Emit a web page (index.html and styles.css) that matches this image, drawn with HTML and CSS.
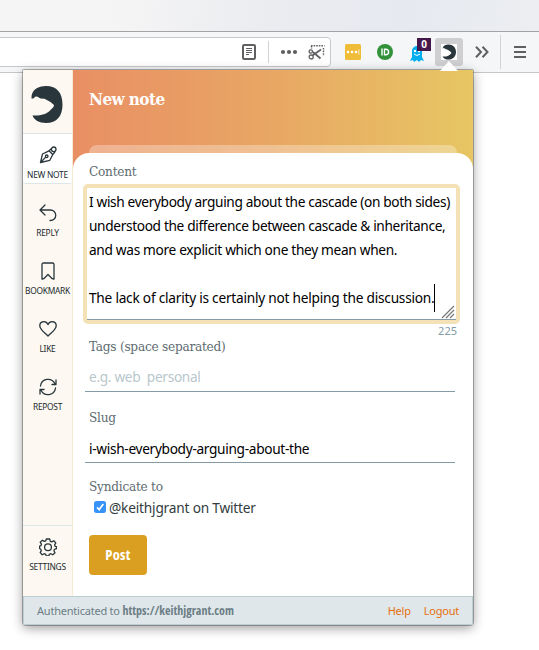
FILE: index.html
```html
<!DOCTYPE html>
<html lang="en">
<head>
<meta charset="utf-8">
<title>New note</title>
<link rel="stylesheet" href="styles.css">
</head>
<body>
<div class="titlebar"></div>
<div class="toolbar">
  <div class="urlbar">
    <svg class="reader" width="14" height="16" viewBox="0 0 14 16"><rect x="1" y="1" width="12" height="14" rx="1.2" fill="none" stroke="#606063" stroke-width="2"/><path d="M4 4.5h6M4 6.5h6M4 8.5h6M4 10.5h3" stroke="#606063"/></svg>
    <i class="sep"></i>
    <svg class="dots" width="18" height="6" viewBox="0 0 18 6" fill="#606063"><circle cx="3" cy="3" r="2.1"/><circle cx="9" cy="3" r="2.1"/><circle cx="15" cy="3" r="2.1"/></svg>
    <svg class="snip" width="17" height="17" viewBox="0 0 17 17" fill="none" stroke="#606063"><path d="M3 1.7h13.500M15.500 4v8M3.500 2v3" stroke-width="1.400" stroke-dasharray="1.6 1"/><path d="M5 8l7.500 6.500M4.500 11.500l8.500-6" stroke-width="1.700"/><circle cx="2.800" cy="7.500" r="1.700" stroke-width="1.300"/><circle cx="3.200" cy="13" r="2" stroke-width="1.300"/></svg>
  </div>
  <div class="tool yellow"><svg width="16" height="16" viewBox="0 0 16 16"><rect width="16" height="16" rx="1.5" fill="#f0bd38"/><g fill="#fff"><circle cx="3" cy="8" r="1.3"/><circle cx="7" cy="8" r="1.3"/><circle cx="11" cy="8" r="1.3"/><path d="M13.5 5.5h.8v5h-.8z"/></g></svg></div>
  <div class="tool green"><svg width="16" height="16" viewBox="0 0 16 16"><circle cx="8" cy="8" r="8" fill="#33913a"/><path d="M5 4.500v7M7.500 5.200h1.300a2.800 2.800 0 0 1 0 5.600H7.500z" fill="none" stroke="#fff" stroke-width="1.400"/></svg></div>
  <div class="tool ghost"><svg width="14" height="17" viewBox="0 0 14 17"><path d="M2 12V6a5 5 0 0 1 10 0v6l2 4-3-1-2 2-2-2-3 2-1-2-3 1z" fill="#00aef0"/><circle cx="5" cy="6" r="1.2" fill="#fff"/><circle cx="9" cy="6" r="1.2" fill="#fff"/><path d="M4 9q3 3 6 0" stroke="#fff" fill="none"/></svg><b class="badge">0</b></div>
  <div class="tool active"><svg width="16" height="16" viewBox="0 0 32 36" preserveAspectRatio="none"><path fill="#fff" d="M0 0h32v36H0z"/><path fill="#29363b" d="M3 10C5 3 9 1 15 1c9 0 15 7 15 17s-6 17-15 17C9 35 5 32 3 28c8 1 14-2 18-8-4-6-8-8-12-9l-3-2z"/></svg></div>
  <div class="tool more"><svg width="14" height="12" viewBox="0 0 14 12" fill="none" stroke="#606063" stroke-width="2"><path d="M1 .8L6 6l-5 5.2M7.5.8l5 5.2-5 5.2"/></svg></div>
  <i class="sep tall"></i>
  <div class="tool menu"><svg width="12" height="12" viewBox="0 0 12 12" stroke="#606063" stroke-width="2"><path d="M0 1h12M0 6h12M0 11h12"/></svg></div>
</div>

<div class="popup">
  <svg class="arrow" width="18" height="10" viewBox="0 0 18 10"><path d="M0 10L9 0l9 10z" fill="#fff"/></svg>
  <div class="main">
    <nav class="side">
      <div class="logo"><svg width="32" height="37" viewBox="0 0 32 37"><path fill="#29363b" d="M.5 12.500C0 4 7 0 15 0c11 0 16.500 7 16.500 18.500S26 37 15 37C8 37 3 34 1.500 29.500c8 .5 14-1.500 17-4.500l4-4 .5-2-3.500-3-6-3.200L9.500 12.500 6 10.500l-2 .2-1.500 1.800z"/></svg></div>
      <a class="item current"><svg width="18" height="18" viewBox="0 0 18 18"><path d="M1.500 16.500L3.500 8l6.500-3.200 3.800 3.700-3 5.800zM2 16l4.700-4.900M10 4.800L12 3M13.800 8.500l2-2.500"/><circle cx="14.700" cy="3.300" r="2.300"/><circle cx="7.700" cy="10.300" r="1.300"/></svg><span>NEW NOTE</span></a>
      <a class="item"><svg width="18" height="18" viewBox="0 0 18 18"><path d="M6 1L1 6l5 5M1 6h10.500a5 5 0 0 1 0 10.500H11"/></svg><span>REPLY</span></a>
      <a class="item"><svg width="18" height="18" viewBox="0 0 18 18"><path d="M3 17V2.500q0-1.500 1.500-1.500h9q1.500 0 1.500 1.500V17l-2-.5-4-4-4 4z"/></svg><span>BOOKMARK</span></a>
      <a class="item"><svg width="18" height="18" viewBox="0 0 18 18"><path d="M9 16C5 12 .8 9.500.8 5.700.8 1 7 .2 9 4.600 11 .2 17.200 1 17.200 5.700 17.200 9.500 13 12 9 16z"/></svg><span>LIKE</span></a>
      <a class="item"><svg width="18" height="18" viewBox="0 0 18 18"><path d="M1.500 8A7.600 7.600 0 0 1 15.800 5.500M17 2v4.500h-4M16.500 10A7.600 7.600 0 0 1 2.200 12.500M1 16v-4.500h4"/></svg><span>REPOST</span></a>
      <a class="item settings"><svg width="18" height="18" viewBox="0 0 18 18"><path d="M7.300 1h3.400l.6 2.300 1.500.6 2-1.200 2 2.200-1.200 2 .5 1.400 1.400.4v2l-2 .6-.6 1.500 1.100 2-2.200 2-2-1.100-1.500.6-.5 1.700H7.300l-.6-1.700-1.500-.6-2 1.100-2-2.200 1.100-2-.6-1.400L.6 10.500v-2.300l1.300-.5.5-1.500-1.200-2 2.200-2 2 1.200 1.400-.6z"/><circle cx="9" cy="9.200" r="3.400"/></svg><span>SETTINGS</span></a>
    </nav>
    <section class="body">
      <h1><span>New note</span></h1>
      <div class="backsheet"></div>
      <form class="sheet">
        <div class="label l-content">Content</div>
        <div class="area">
          <p><span class="t1">I wish everybody arguing about the cascade (on both sides)</span></p>
          <p><span class="t2">understood the difference between cascade &amp; inheritance,</span></p>
          <p><span class="t3">and was more explicit which one they mean when.</span></p>
          <p>&nbsp;</p>
          <p class="caret"><span class="t4">The lack of clarity is certainly not helping the discussion.</span></p>
          <svg class="grip" width="14" height="14" viewBox="0 0 14 14" stroke="#777" stroke-width="1.200"><path d="M1 13L13 1M5 13l8-8M9 13l4-4"/></svg>
        </div>
        <div class="count">225</div>
        <div class="label l-tags">Tags (space separated)</div>
        <div class="field ph">e.g. web&nbsp; personal</div>
        <div class="label l-slug">Slug</div>
        <div class="field slug">i-wish-everybody-arguing-about-the</div>
        <div class="label l-syn">Syndicate to</div>
        <div class="check"><svg width="12" height="12" viewBox="0 0 12 12"><rect width="12" height="12" rx="2.500" fill="#3793f8"/><path d="M3 6.300l2.200 2.300L9.300 3" fill="none" stroke="#fff" stroke-width="1.700"/></svg><span>@keithjgrant on Twitter</span></div>
        <div class="post"><span>Post</span></div>
      </form>
    </section>
  </div>
  <footer><span class="auth">Authenticated to <b>https://keithjgrant.com</b></span><a class="help">Help</a><a class="logout">Logout</a></footer>
</div>
</body>
</html>
```
FILE: styles.css
```css
* { box-sizing: border-box; }
body { margin: 0; height: 650px; overflow: hidden; background: #fff; font-family: "Noto Sans", sans-serif; }
svg { display: block; flex: none; }
.titlebar { height: 32px; border-bottom: 1px solid #a2a2a7; background: linear-gradient(100deg, #f5f5f5 20%, #ebecf0 50%, #e6e9f0 75%, #eceef1); }
.toolbar { height: 41px; background: #f5f6f7; border-bottom: 1px solid #c6c6c8; display: flex; align-items: center; }
.urlbar { flex: none; width: 332px; height: 30px; margin-left: -1px; border: 1px solid #c8c8cb; border-radius: 0 4px 4px 0; background: #fff; display: flex; align-items: center; justify-content: flex-end; padding-right: 5px; }
.sep { width: 1px; height: 22px; background: #d3d3d5; margin: 0 11px 0 13px; }
.reader { margin-right: -1px; }
.snip { margin-left: 10px; }
.tool { display: flex; align-items: center; justify-content: center; width: 28px; height: 28px; flex: none; position: relative; }
.yellow { margin-left: 8px; }
.green { margin-left: 4px; }
.ghost { margin-left: 4px; top: 1px; }
.badge { position: absolute; left: 14px; top: -1px; width: 14px; height: 13px; background: #46174a; color: #fff; font: bold 10px/13px "Noto Sans", sans-serif; text-align: center; }
.active { margin-left: 4px; background: #cfcfd1; border-radius: 3px; }
.more { margin-left: 5px; }
.sep.tall { height: 34px; margin: 0 5px 0 4px; }
.popup { position: absolute; left: 23px; top: 70px; width: 450px; height: 555px; background: #fff; display: flex; flex-direction: column; box-shadow: 0 0 0 1px rgba(0,0,0,.28), 0 3px 12px rgba(0,0,0,.4); border-radius: 1px 1px 3px 3px; }
.arrow { position: absolute; left: 417px; top: -9px; }
.main { flex: 1; display: flex; min-height: 0; }
.side { width: 50px; background: #fdf8f2; border-right: 1px solid #f5ebd3; display: flex; flex-direction: column; }
.logo { height: 63px; padding: 16px 0 0 8px; }
.item { height: 58px; display: flex; flex-direction: column; align-items: center; padding-top: 14px; font-size: 8.400px; letter-spacing: -.27px; line-height: 12px; color: #222b2e; white-space: nowrap; }
.item svg { fill: none; stroke: #29363b; stroke-width: 1.300; stroke-linejoin: round; stroke-linecap: round; margin-bottom: 5px; }
.item.current { height: 51px; padding-top: 12px; background: #fff; border-top: 1px solid #dfe6e8; border-bottom: 1px solid #dfe6e8; margin-bottom: 6px; border-radius: 0 0 3px 3px; }
.settings { margin-top: auto; height: 71px; padding-top: 12px; border-top: 1px solid #dfe6e8; }
.body { flex: 1; background: linear-gradient(90deg, #e98f64, #e8a764 50%, #e7c663); display: flex; flex-direction: column; }
h1 { margin: 0; height: 75px; padding: 18px 0 0 16px; font: bold 17px/22px "DejaVu Serif", serif; font-stretch: condensed; letter-spacing: -.6px; color: #fff; }
.backsheet { height: 8px; margin: 0 16px; border-radius: 8px 8px 0 0; background: rgba(255,255,255,.3); }
.sheet { flex: 1; background: #fff; border-radius: 16px 16px 0 0; padding: 9px 12px 0 10px; display: flex; flex-direction: column; }
.label { font: 13.500px/18px "DejaVu Serif", serif; font-stretch: condensed; letter-spacing: -.25px; color: #5d6b71; margin-left: 6px; white-space: nowrap; }
.area { position: relative; margin-top: 4px; width: 377px; height: 140px; border: 4px solid #f4e1b5; border-radius: 5px; padding: 2px 2px 0; }
.area:after { content: ""; position: absolute; left: 0; right: 0; bottom: 0; height: 1px; background: #849ba6; }
.area p { margin: 0; font-size: 13.700px; line-height: 24px; color: #000; white-space: nowrap; }
.t1, .t2 { letter-spacing: -.350px; }
.t3 { letter-spacing: -.320px; }
.t4 { letter-spacing: -.240px; }
.caret span { position: relative; }
.caret span:after { content: ""; position: absolute; right: -1px; top: -4px; width: 1px; height: 28px; background: #000; }
.grip { position: absolute; right: 1px; bottom: 1px; }
.count { font-size: 11px; line-height: 13px; text-align: right; color: #849ba6; padding-right: 4px; }
.field { margin-left: 2px; width: 370px; height: 28px; line-height: 26px; border-bottom: 1px solid #849ba6; padding-left: 4px; font-size: 13.700px; letter-spacing: -.320px; }
.ph { color: #b9c7cc; margin-top: 9px; }
.l-slug { margin-top: 16px; }
.slug { margin-top: 9px; line-height: 27px; }
.l-syn { margin-top: 14px; }
.check { display: flex; align-items: center; gap: 3px; height: 22px; margin: 1px 0 0 11px; font-size: 13.700px; letter-spacing: -.2px; color: #333d40; }
.post { width: 58px; height: 40px; margin: 17px 0 0 6px; border-radius: 4px; background: #da9f20; color: #fff; font: bold 14.500px/40px "Open Sans", sans-serif; font-stretch: 75%; letter-spacing: .3px; text-align: center; }
footer { height: 29px; background: #e0e7ea; border: 1px solid #bccdd3; display: flex; align-items: center; padding: 0 13px; font-size: 11px; letter-spacing: -.22px; color: #6b7e85; }
footer b { font: bold 12px "Open Sans", sans-serif; font-stretch: 75%; letter-spacing: 0; }
.help { margin-left: auto; margin-right: 13px; }
footer a { color: #e5700d; }
```
